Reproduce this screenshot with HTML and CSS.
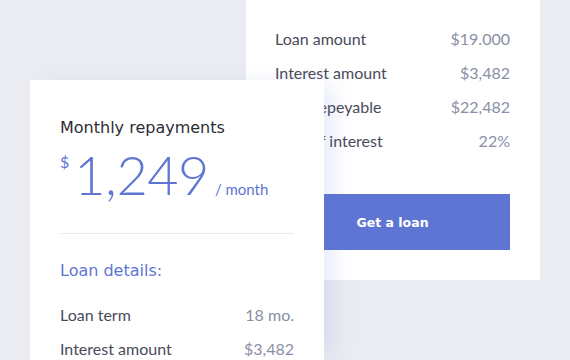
FILE: index.html
```html
<!DOCTYPE html>
<html lang="en">

<head>
    <meta charset="UTF-8">
    <meta name="viewport" content="width=device-width, initial-scale=1.0">
    <title>Loan Calculator - Summary</title>
    <link rel="stylesheet" href="styles.css">
</head>

<body>

    <div class="stage">
        <div class="card summary">
            <ul class="rows">
                <li><span>Loan amount</span><span class="value">$19.000</span></li>
                <li><span>Interest amount</span><span class="value">$3,482</span></li>
                <li><span>Total repeyable</span><span class="value">$22,482</span></li>
                <li><span>Rate of interest</span><span class="value">22%</span></li>
            </ul>
            <button class="btn">Get a loan</button>
        </div>

        <div class="card repayments">
            <h3>Monthly repayments</h3>
            <div class="amount">
                <span class="currency">$</span>
                <span class="number">1,249</span>
                <span class="period">/ month</span>
            </div>
            <hr class="divider">
            <h4>Loan details:</h4>
            <ul class="rows">
                <li><span>Loan term</span><span class="value">18 mo.</span></li>
                <li><span>Interest amount</span><span class="value">$3,482</span></li>
            </ul>
        </div>
    </div>

</body>

</html>
```

FILE: styles.css
```css
body {
    margin: 0;
    background-color: #ebecf2;
    font-family: Lato, "Open Sans", sans-serif;
    overflow: hidden;
}

.stage {
    display: grid;
    grid-template-columns: 30px 216px 78px 216px 30px;
    grid-template-rows: 80px 200px 80px;
    height: 360px;
    overflow: hidden;
}

.card {
    background-color: #fff;
    box-sizing: border-box;
}

.summary {
    grid-column: 3 / 5;
    grid-row: 1 / 3;
    padding: 22px 30px 30px 29px;
}

.repayments {
    grid-column: 2 / 4;
    grid-row: 2 / 4;
    padding: 36px 30px 0 30px;
    box-shadow: 14px 0 22px -6px rgba(94, 117, 211, 0.16);
    z-index: 1;
}

.rows {
    list-style: none;
    margin: 0;
    padding: 0;
}

.rows li {
    display: flex;
    justify-content: space-between;
    height: 34px;
    line-height: 34px;
    font-size: 16px;
    color: #4a4b5a;
}

.rows .value {
    color: #8a8fa6;
}

.btn {
    display: block;
    width: 100%;
    height: 56px;
    margin-top: 36px;
    background-color: #5e75d4;
    color: #fff;
    border: none;
    font-family: "DejaVu Sans", sans-serif;
    font-weight: bold;
    font-size: 12.5px;
    cursor: pointer;
}

h3, h4 {
    margin: 0;
    font-family: "DejaVu Sans", sans-serif;
    font-weight: normal;
    font-size: 16px;
    line-height: 24px;
}

h3 {
    color: #2c2d38;
}

h4 {
    color: #5e75d4;
    margin-bottom: 15px;
}

.amount {
    display: flex;
    align-items: baseline;
    color: #5e75d4;
    height: 64px;
    margin-top: 3px;
}

.currency {
    font-size: 16px;
    align-self: flex-start;
    margin-top: 9px;
    margin-right: 5px;
}

.number {
    font-size: 54px;
    font-weight: 300;
    line-height: 64px;
    letter-spacing: -0.5px;
}

.period {
    font-size: 15px;
    margin-left: 6px;
}

.divider {
    border: none;
    border-top: 1px solid #ebebee;
    margin: 26px 0 25px 0;
}
```
